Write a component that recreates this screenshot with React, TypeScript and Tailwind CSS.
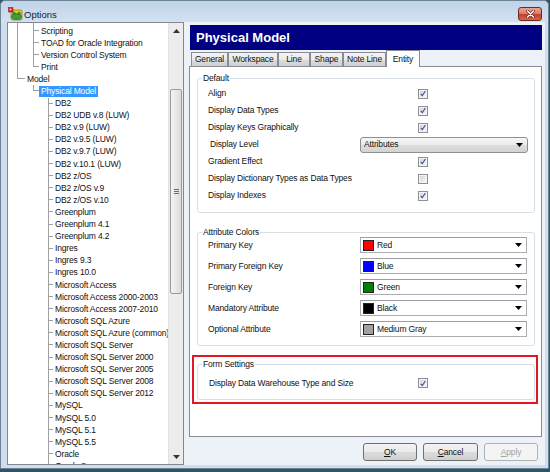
import React from "react";

type Node = { text: string; depth: number; last: boolean; lines: boolean[]; selected?: boolean };

const dbs = [
  "DB2",
  "DB2 UDB v.8 (LUW)",
  "DB2 v.9 (LUW)",
  "DB2 v.9.5 (LUW)",
  "DB2 v.9.7 (LUW)",
  "DB2 v.10.1 (LUW)",
  "DB2 z/OS",
  "DB2 z/OS v.9",
  "DB2 z/OS v.10",
  "Greenplum",
  "Greenplum 4.1",
  "Greenplum 4.2",
  "Ingres",
  "Ingres 9.3",
  "Ingres 10.0",
  "Microsoft Access",
  "Microsoft Access 2000-2003",
  "Microsoft Access 2007-2010",
  "Microsoft SQL Azure",
  "Microsoft SQL Azure (common)",
  "Microsoft SQL Server",
  "Microsoft SQL Server 2000",
  "Microsoft SQL Server 2005",
  "Microsoft SQL Server 2008",
  "Microsoft SQL Server 2012",
  "MySQL",
  "MySQL 5.0",
  "MySQL 5.1",
  "MySQL 5.5",
  "Oracle",
  "Oracle 8",
];

const nodes: Node[] = [
  ...["Scripting", "TOAD for Oracle Integration", "Version Control System", "Print"].map((t, i, a) => ({
    text: t,
    depth: 1,
    last: i === a.length - 1,
    lines: [true],
  })),
  { text: "Model", depth: 0, last: true, lines: [] },
  { text: "Physical Model", depth: 1, last: true, lines: [false], selected: true },
  ...dbs.map((t) => ({ text: t, depth: 2, last: false, lines: [false, false] })),
];

const PASS = ["w-[16px]", "w-[15px]"];
const CONN = ["w-[8px]", "w-[6px]", "w-[5px]"];

function TreeRow({ n }: { n: Node }) {
  return (
    <div className="flex h-[12.1px] pl-[9px]">
      {n.lines.map((on, i) => (
        <div key={i} className={`${PASS[i]} shrink-0 border-l ${on ? "border-[#a0a0a0]" : "border-transparent"}`} />
      ))}
      <div className={`${CONN[n.depth]} shrink-0 flex flex-col`}>
        <div className="h-[6px] border-l border-b border-[#a0a0a0]" />
        <div className={`flex-1 border-l ${n.last ? "border-transparent" : "border-[#a0a0a0]"}`} />
      </div>
      <span
        className={`self-center h-[11px] leading-[11px] px-[2px] whitespace-nowrap ${
          n.selected ? "bg-[#3399ff] text-white" : "text-[#111]"
        }`}
      >
        {n.text}
      </span>
    </div>
  );
}

function Tree() {
  return (
    <div className="w-[177px] h-[443px] shrink-0 border border-[#828790] bg-white flex">
      <div className="flex-1 overflow-hidden">
        <div className="flex h-[2px] pl-[9px]">
          <div className="w-[16px] border-l border-[#a0a0a0]" />
          <div className="w-[6px] border-l border-[#a0a0a0]" />
        </div>
        {nodes.map((n, i) => (
          <TreeRow key={i} n={n} />
        ))}
      </div>
      <div className="w-[15px] shrink-0 bg-[#ececec] border-l border-[#e2e2e2] flex flex-col items-center">
        <div className="h-[15px] w-full flex items-center justify-center">
          <svg width="7" height="4" viewBox="0 0 7 4">
            <polygon points="0,4 3.5,0 7,4" fill="#333" />
          </svg>
        </div>
        <div className="mt-[51px] w-[12px] h-[205px] rounded-[2px] border border-[#9a9a9a] bg-linear-to-r from-[#f4f4f4] to-[#dcdcdc] flex flex-col items-center justify-center gap-[1px]">
          <div className="w-[5px] h-px bg-[#6d6d6d]" />
          <div className="w-[5px] h-px bg-[#6d6d6d]" />
          <div className="w-[5px] h-px bg-[#6d6d6d]" />
        </div>
        <div className="flex-1" />
        <div className="h-[15px] w-full flex items-center justify-center">
          <svg width="7" height="4" viewBox="0 0 7 4">
            <polygon points="0,0 7,0 3.5,4" fill="#333" />
          </svg>
        </div>
      </div>
    </div>
  );
}

function Check({ checked }: { checked: boolean }) {
  return (
    <div className="w-[10px] h-[10px] shrink-0 border border-[#8e8f8f] bg-[#f4f4f4] p-px">
      <div className="w-full h-full bg-linear-to-br from-[#d4d6da] to-[#f7f7f7] flex items-center justify-center">
        {checked && (
          <svg width="7" height="7" viewBox="0 0 7 7">
            <path d="M0.8 3.8 L2.7 5.9 L6.3 0.6" stroke="#3b4f9e" strokeWidth="1.3" fill="none" />
          </svg>
        )}
      </div>
    </div>
  );
}

function Arrow() {
  return (
    <svg width="7" height="4" viewBox="0 0 7 4" className="shrink-0">
      <polygon points="0,0 7,0 3.5,4" fill="#000" />
    </svg>
  );
}

function CheckRow({ label, checked }: { label: string; checked: boolean }) {
  return (
    <div className="flex items-center h-[17px]">
      <div className="w-[210px] shrink-0">{label}</div>
      <Check checked={checked} />
    </div>
  );
}

function ColorRow({ label, color, name }: { label: string; color: string; name: string }) {
  return (
    <div className="flex items-center h-[21px]">
      <div className="w-[152px] shrink-0">{label}</div>
      <div className="w-[167px] h-[16px] border border-[#abadb3] border-t-[#9a9da5] bg-white flex items-center pl-[2px] pr-[4px]">
        <div className="w-[11px] h-[11px] border border-[#222]" style={{ backgroundColor: color }} />
        <div className="ml-[3px] flex-1">{name}</div>
        <Arrow />
      </div>
    </div>
  );
}

const TABS = [
  { t: "General", w: "w-[37px]" },
  { t: "Workspace", w: "w-[50px]" },
  { t: "Line", w: "w-[32px]" },
  { t: "Shape", w: "w-[33px]" },
  { t: "Note Line", w: "w-[43px]" },
];

export default function App() {
  return (
    <div className="w-[550px] h-[472px] bg-[#2c5566] overflow-hidden [font-family:'Liberation_Sans',Arial,sans-serif] text-[8.5px] tracking-[-0.15px] text-[#111]">
      <div className="w-[549px] h-[469px] bg-[#cfddee] border border-[#6f8396] rounded-t-[5px] flex flex-col">
        {/* Title bar */}
        <div className="h-[21px] shrink-0 flex items-start pl-[7px] bg-linear-to-b from-[#c0d3e9] to-[#d3e1f1] rounded-t-[5px]">
          <svg width="15" height="14" viewBox="0 0 15 14" className="mt-[6px] shrink-0">
            <rect x="3" y="3" width="11" height="10" rx="1.5" fill="#f0cf22" stroke="#6b5a10" strokeWidth="0.6" />
            <ellipse cx="8.5" cy="9.6" rx="5" ry="2.9" fill="#3d9f33" stroke="#1f5a1c" strokeWidth="0.6" />
            <circle cx="6" cy="6.3" r="1.4" fill="#3d9f33" stroke="#1f5a1c" strokeWidth="0.4" />
            <circle cx="11" cy="6.3" r="1.4" fill="#3d9f33" stroke="#1f5a1c" strokeWidth="0.4" />
            <rect x="0.5" y="0.5" width="4.5" height="4.5" fill="#e0262a" stroke="#7d1414" strokeWidth="0.5" />
            <rect x="1.8" y="1.8" width="1.4" height="1.4" fill="#fff" />
          </svg>
          <div className="mt-[8px] ml-[1px] leading-[12px] text-[9.5px] tracking-normal text-[#1a1a1a]">Options</div>
          <div className="ml-auto mr-[6px] mt-[6px] w-[24px] h-[14px] rounded-[3px] border border-[#6e2a22] bg-[linear-gradient(#e9a493_0%,#d9806b_45%,#c1402a_55%,#d8664c_100%)] flex items-center justify-center">
            <svg width="9" height="8" viewBox="0 0 9 8">
              <path d="M1.5 1 L7.5 7 M7.5 1 L1.5 7" stroke="#5a1e16" strokeWidth="2.6" strokeLinecap="round" />
              <path d="M1.5 1 L7.5 7 M7.5 1 L1.5 7" stroke="#fff" strokeWidth="1.5" strokeLinecap="round" />
            </svg>
          </div>
        </div>

        {/* Client */}
        <div className="flex ml-[6px] mr-[3px] h-[443px] bg-[#edf2f8]">
          <Tree />
          <div className="ml-[5px] w-[353px] pt-[3px] flex flex-col">
            <div className="ml-[1px] h-[25px] bg-[#000080] flex items-center pl-[6px] text-white font-bold text-[13px] tracking-normal">
              Physical Model
            </div>
            <div className="relative z-10 flex items-end h-[17px] -mb-[1px] pl-[2px]">
              {TABS.map((tb) => (
                <div
                  key={tb.t}
                  className={`${tb.w} h-[14px] mb-[1px] border border-b-0 border-[#898c95] bg-[linear-gradient(#f2f2f2_0%,#ebebeb_50%,#dddddd_50%,#cfcfcf_100%)] flex items-center justify-center whitespace-nowrap`}
                >
                  {tb.t}
                </div>
              ))}
              <div className="w-[34px] h-[17px] border border-b-0 border-[#898c95] bg-white flex items-start pt-[2px] justify-center">
                Entity
              </div>
            </div>
            <div className="h-[371px] border border-[#898c95] bg-white flex flex-col">
              <fieldset className="mt-[6.5px] ml-[7px] mr-[6px] border border-[#d5dfe5] rounded-[3px] p-0">
                <legend className="ml-[4px] px-[1px] leading-[9px]">Default</legend>
                <div className="pl-[10px] pt-[2.5px] pb-[8px]">
                  <CheckRow label="Align" checked />
                  <CheckRow label="Display Data Types" checked />
                  <CheckRow label="Display Keys Graphically" checked />
                  <div className="flex items-center h-[17px]">
                    <div className="w-[152px] shrink-0 pl-[2px]">Display Level</div>
                    <div className="w-[168px] h-[16px] rounded-[3px] border border-[#8e8f8f] bg-[linear-gradient(#f6f6f6_0%,#ebebeb_50%,#dedede_50%,#d3d3d3_100%)] flex items-center pl-[3px] pr-[4px]">
                      <div className="flex-1">Attributes</div>
                      <Arrow />
                    </div>
                  </div>
                  <CheckRow label="Gradient Effect" checked />
                  <CheckRow label="Display Dictionary Types as Data Types" checked={false} />
                  <CheckRow label="Display Indexes" checked />
                </div>
              </fieldset>

              <fieldset className="mt-[14.5px] ml-[7px] mr-[6px] border border-[#d5dfe5] rounded-[3px] p-0">
                <legend className="ml-[4px] px-[1px] leading-[9px]">Attribute Colors</legend>
                <div className="pl-[10px] -mt-[2px] pb-[5.5px]">
                  <ColorRow label="Primary Key" color="#ff0000" name="Red" />
                  <ColorRow label="Primary Foreign Key" color="#0000ff" name="Blue" />
                  <ColorRow label="Foreign Key" color="#008000" name="Green" />
                  <ColorRow label="Mandatory Attribute" color="#000000" name="Black" />
                  <ColorRow label="Optional Attribute" color="#a4a0a0" name="Medium Gray" />
                </div>
              </fieldset>

              <div className="mt-[9px] ml-[2px] mr-[3px] border-2 border-[#e3171f] pt-[2.5px] pb-[2px] pl-[3px] pr-[1px]">
                <fieldset className="border border-[#d5dfe5] rounded-[3px] p-0">
                  <legend className="ml-[4px] px-[1px] leading-[9px]">Form Settings</legend>
                  <div className="pl-[11px] pt-[6px] pb-[7.5px]">
                    <div className="flex items-center h-[17px]">
                      <div className="w-[209px] shrink-0">Display Data Warehouse Type and Size</div>
                      <Check checked />
                    </div>
                  </div>
                </fieldset>
              </div>
            </div>

            <div className="mt-[6px] h-[18px] flex justify-end gap-[6px] pr-[4px]">
              <div className="w-[54px] h-[18px] rounded-[3px] border border-[#707070] bg-[linear-gradient(#f2f2f2_0%,#ebebeb_50%,#dddddd_50%,#cfcfcf_100%)] flex items-center justify-center">
                <span>
                  <span className="underline">O</span>K
                </span>
              </div>
              <div className="w-[55px] h-[18px] rounded-[3px] border border-[#707070] bg-[linear-gradient(#f2f2f2_0%,#ebebeb_50%,#dddddd_50%,#cfcfcf_100%)] flex items-center justify-center">
                <span>
                  <span className="underline">C</span>ancel
                </span>
              </div>
              <div className="w-[54px] h-[18px] rounded-[3px] border border-[#adb2b5] bg-[#f4f4f4] text-[#a3a3a3] flex items-center justify-center">
                <span>
                  <span className="underline">A</span>pply
                </span>
              </div>
            </div>
          </div>
        </div>
      </div>
    </div>
  );
}
